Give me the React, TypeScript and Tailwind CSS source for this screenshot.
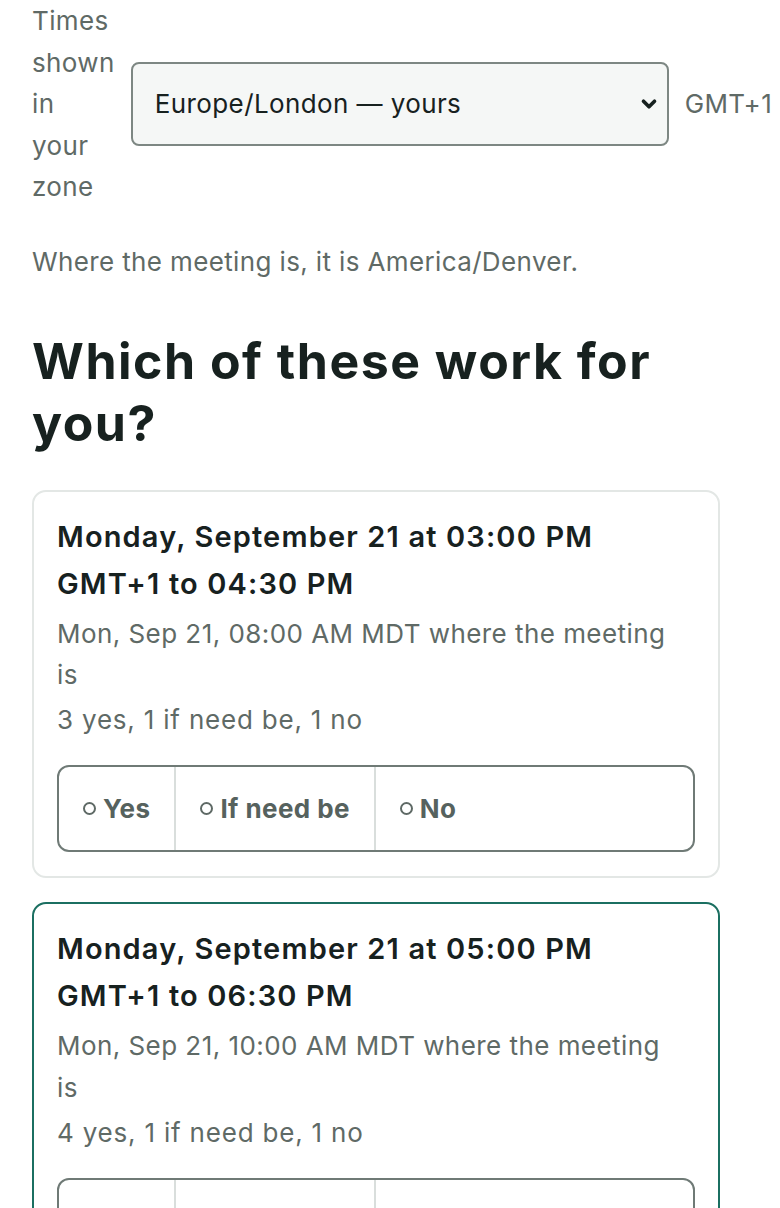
import React from "react";

type Slot = {
  title: string;
  local: string;
  counts: string;
  selected?: boolean;
};

const slots: Slot[] = [
  {
    title: "Monday, September 21 at 03:00 PM GMT+1 to 04:30 PM",
    local: "Mon, Sep 21, 08:00 AM MDT where the meeting is",
    counts: "3 yes, 1 if need be, 1 no",
  },
  {
    title: "Monday, September 21 at 05:00 PM GMT+1 to 06:30 PM",
    local: "Mon, Sep 21, 10:00 AM MDT where the meeting is",
    counts: "4 yes, 1 if need be, 1 no",
    selected: true,
  },
];

function Ring() {
  return <span className="inline-block h-[13px] w-[13px] shrink-0 rounded-full border-2 border-[#5f6a66]" />;
}

function Choices() {
  const opts = ["Yes", "If need be", "No"];
  return (
    <div className="mt-[25px] flex h-[87px] overflow-hidden rounded-[12px] border-2 border-[#6f7a76]">
      {opts.map((o, i) => (
        <button
          key={o}
          type="button"
          className={
            "flex items-center gap-[7px] px-6 text-[26px] font-bold tracking-[0.4px] text-[#56625e] " +
            (i < opts.length - 1 ? "border-r-2 border-[#d9dedc] " : "flex-1 ")
          }
        >
          <Ring />
          {o}
        </button>
      ))}
    </div>
  );
}

function SlotCard({ slot }: { slot: Slot }) {
  return (
    <div
      className={
        "rounded-[14px] border-2 bg-white px-[23px] pb-6 pt-[21px] " +
        (slot.selected ? "border-[#1b6f61]" : "border-[#e3e7e5]")
      }
    >
      <h3 className="text-[29px] font-semibold leading-[47px] tracking-[1.15px] text-[#17211f]">{slot.title}</h3>
      <p className="mt-[6px] pr-[10px] text-[26px] leading-[41.6px] tracking-[0.45px] text-[#5f6a66]">{slot.local}</p>
      <p className="mt-[3px] text-[26px] leading-[41.6px] tracking-[0.8px] text-[#5f6a66]">{slot.counts}</p>
      <Choices />
    </div>
  );
}

export default function App() {
  return (
    <div
      className="min-h-screen overflow-hidden bg-white tracking-[0.37px]"
      style={{ fontFamily: "Inter, 'Noto Sans', sans-serif" }}
    >
      <div className="ml-8 w-[688px]">
        <div className="flex items-center gap-4 whitespace-nowrap">
          <span className="w-min whitespace-normal text-[26px] leading-[41.6px] text-[#5f6a66]">
            Times shown in your zone
          </span>
          <div className="relative shrink-0">
            <select
              defaultValue="london"
              className="h-[84px] w-[538px] appearance-none rounded-[8px] border-2 border-[#7d8783] bg-[#f5f7f6] pl-[22px] text-[26px] tracking-[0.4px] text-[#17211f] outline-none"
            >
              <option value="london">Europe/London — yours</option>
              <option value="denver">America/Denver</option>
            </select>
            <svg
              className="pointer-events-none absolute right-[9px] top-1/2 h-[22px] w-[22px] -translate-y-1/2"
              viewBox="0 0 24 24"
              fill="none"
              stroke="#17211f"
              strokeWidth="4"
              strokeLinecap="round"
              strokeLinejoin="round"
            >
              <path d="M6 9l6 6 6-6" />
            </svg>
          </div>
          <span className="shrink-0 text-[26px] text-[#5f6a66]">GMT+1</span>
        </div>

        <p className="mt-[33px] text-[26px] leading-[41.6px] text-[#5f6a66]">
          Where the meeting is, it is America/Denver.
        </p>

        <h2 className="mt-[47px] text-[50px] font-bold leading-[62.5px] tracking-[1.5px] text-[#17211f]">
          Which of these work for you?
        </h2>

        <div className="mt-[35px] flex flex-col gap-6">
          {slots.map((s) => (
            <SlotCard key={s.title} slot={s} />
          ))}
        </div>
      </div>
    </div>
  );
}
